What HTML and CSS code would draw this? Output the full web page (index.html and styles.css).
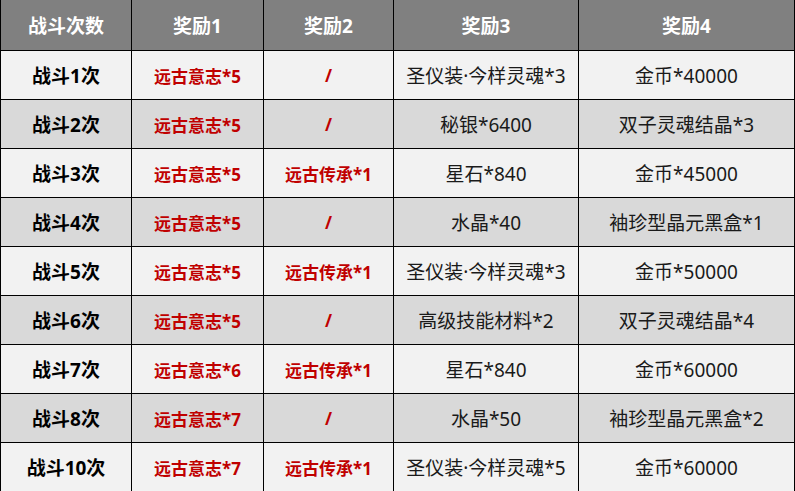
FILE: index.html
```html
<!DOCTYPE html>
<html lang="zh-CN">
<head>
<meta charset="utf-8">
<title>奖励表</title>
<link rel="stylesheet" href="styles.css">
</head>
<body>
<table class="rewards">
  <colgroup>
    <col class="c1"><col class="c2"><col class="c3"><col class="c4"><col class="c5">
  </colgroup>
  <thead>
    <tr><th>战斗次数</th><th>奖励1</th><th>奖励2</th><th>奖励3</th><th>奖励4</th></tr>
  </thead>
  <tbody>
    <tr><td class="n">战斗1次</td><td class="r">远古意志*5</td><td class="r">/</td><td>圣仪装·今样灵魂*3</td><td>金币*40000</td></tr>
    <tr><td class="n">战斗2次</td><td class="r">远古意志*5</td><td class="r">/</td><td>秘银*6400</td><td>双子灵魂结晶*3</td></tr>
    <tr><td class="n">战斗3次</td><td class="r">远古意志*5</td><td class="r">远古传承*1</td><td>星石*840</td><td>金币*45000</td></tr>
    <tr><td class="n">战斗4次</td><td class="r">远古意志*5</td><td class="r">/</td><td>水晶*40</td><td>袖珍型晶元黑盒*1</td></tr>
    <tr><td class="n">战斗5次</td><td class="r">远古意志*5</td><td class="r">远古传承*1</td><td>圣仪装·今样灵魂*3</td><td>金币*50000</td></tr>
    <tr><td class="n">战斗6次</td><td class="r">远古意志*5</td><td class="r">/</td><td>高级技能材料*2</td><td>双子灵魂结晶*4</td></tr>
    <tr><td class="n">战斗7次</td><td class="r">远古意志*6</td><td class="r">远古传承*1</td><td>星石*840</td><td>金币*60000</td></tr>
    <tr><td class="n">战斗8次</td><td class="r">远古意志*7</td><td class="r">/</td><td>水晶*50</td><td>袖珍型晶元黑盒*2</td></tr>
    <tr><td class="n">战斗10次</td><td class="r">远古意志*7</td><td class="r">远古传承*1</td><td>圣仪装·今样灵魂*5</td><td>金币*60000</td></tr>
  </tbody>
</table>
</body>
</html>
```
FILE: styles.css
```css
html, body {
  margin: 0;
  padding: 0;
  background: #ffffff;
}
body {
  font-family: "Noto Sans", "Noto Sans CJK SC", sans-serif;
}
.rewards {
  width: 795px;
  border-collapse: collapse;
  table-layout: fixed;
  border-left: 1px solid #000;
  border-right: 3px solid #000;
  border-bottom: 2px solid #000;
}
.c1 { width: 131px; }
.c2 { width: 132px; }
.c3 { width: 130px; }
.c4 { width: 185px; }
.c5 { width: 217px; }
.rewards th {
  height: 50px;
  padding: 0;
  background: #808080;
  color: #ffffff;
  font-size: 19px;
  font-weight: bold;
  text-align: center;
  border-left: 1px solid #000;
  border-right: 1px solid #000;
  border-bottom: 1px solid #000;
}
.rewards td {
  height: 48px;
  padding: 0;
  text-align: center;
  font-size: 19px;
  color: #1a1a1a;
  border: 1px solid #000;
}
.rewards tbody tr:nth-child(odd) td { background: #f2f2f2; }
.rewards tbody tr:nth-child(even) td { background: #d9d9d9; }
.rewards td.n {
  font-weight: bold;
  color: #000;
}
.rewards td.r {
  font-weight: bold;
  font-size: 17px;
  color: #c00000;
}
```
